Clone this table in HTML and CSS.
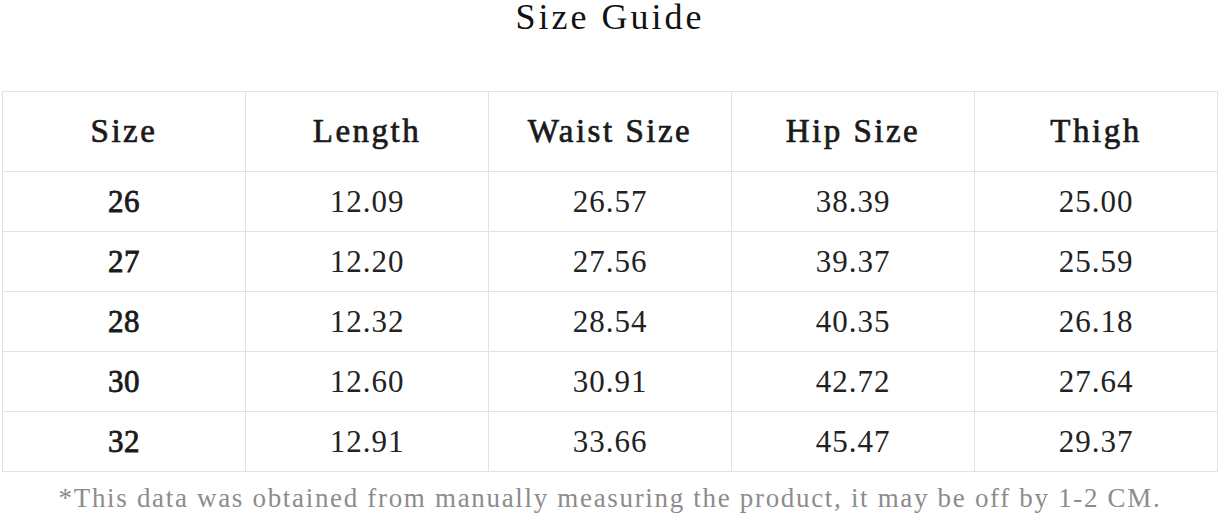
FILE: index.html
```html
<!DOCTYPE html>
<html lang="en">
<head>
<meta charset="utf-8">
<title>Size Guide</title>
<link rel="stylesheet" href="styles.css">
</head>
<body>
<div class="page">
  <h1 class="title">Size Guide</h1>
  <table class="chart">
    <thead>
      <tr>
        <th>Size</th>
        <th>Length</th>
        <th>Waist Size</th>
        <th>Hip Size</th>
        <th>Thigh</th>
      </tr>
    </thead>
    <tbody>
      <tr><td class="sz">26</td><td>12.09</td><td>26.57</td><td>38.39</td><td>25.00</td></tr>
      <tr><td class="sz">27</td><td>12.20</td><td>27.56</td><td>39.37</td><td>25.59</td></tr>
      <tr><td class="sz">28</td><td>12.32</td><td>28.54</td><td>40.35</td><td>26.18</td></tr>
      <tr><td class="sz">30</td><td>12.60</td><td>30.91</td><td>42.72</td><td>27.64</td></tr>
      <tr><td class="sz">32</td><td>12.91</td><td>33.66</td><td>45.47</td><td>29.37</td></tr>
    </tbody>
  </table>
  <p class="note">*This data was obtained from manually measuring the product, it may be off by 1-2 CM.</p>
</div>
</body>
</html>
```
FILE: styles.css
```css
html, body {
  margin: 0;
  padding: 0;
  background: #ffffff;
}

.page {
  width: 1220px;
  height: 513px;
  overflow: hidden;
  font-family: "Liberation Serif", "Times New Roman", serif;
  color: #1a1a1a;
}

.title {
  margin: 0;
  height: 34px;
  line-height: 34px;
  text-align: center;
  font-size: 36px;
  font-weight: normal;
  letter-spacing: 3px;
  color: #111;
}

.chart {
  margin: 57px 0 0 2px;
  width: 1216px;
  border-collapse: collapse;
  table-layout: fixed;
}

.chart th,
.chart td {
  border: 1px solid #e2e2e2;
  text-align: center;
  padding: 0;
}

.chart th {
  height: 79px;
  font-size: 33px;
  font-weight: normal;
  letter-spacing: 2.5px;
  color: #1a1a1a;
  -webkit-text-stroke: 0.7px #1a1a1a;
}

.chart td {
  height: 59px;
  font-size: 31px;
  letter-spacing: 1px;
  color: #222;
}

.chart td.sz {
  letter-spacing: 0.5px;
  -webkit-text-stroke: 0.8px #1a1a1a;
  color: #1a1a1a;
}

.note {
  margin: 10px 0 0 0;
  text-align: center;
  font-size: 27px;
  line-height: 32px;
  letter-spacing: 1.68px;
  color: #8c8c8c;
  white-space: nowrap;
}
```
